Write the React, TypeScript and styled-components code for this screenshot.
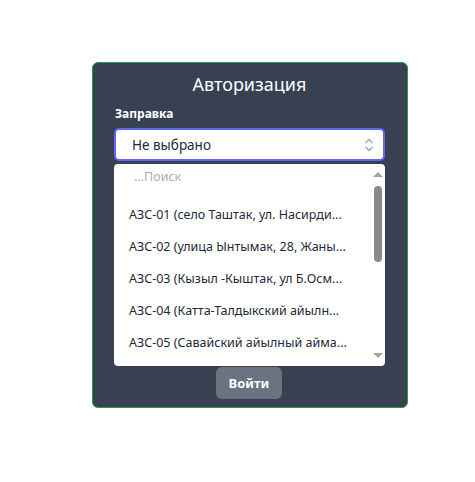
import styled, { createGlobalStyle } from "styled-components";

const GlobalStyle = createGlobalStyle`
  body {
    margin: 0;
    background: #ffffff;
    font-family: "Noto Sans", "Open Sans", sans-serif;
  }
`;

// shown as the menu renders them, already shortened
const stations = [
  "АЗС-01 (село Таштак, ул. Насирди...",
  "АЗС-02 (улица Ынтымак, 28, Жаны...",
  "АЗС-03 (Кызыл -Кыштак, ул Б.Осм...",
  "АЗС-04 (Катта-Талдыкский айылн...",
  "АЗС-05 (Савайский айылный айма...",
];

const ChevronsIcon = () => (
  <svg width="10" height="14" viewBox="0 0 10 14" fill="none">
    <path d="M1.5 5 L5 1.5 L8.5 5" stroke="#9ca3af" strokeWidth="1.3" />
    <path d="M1.5 9 L5 12.5 L8.5 9" stroke="#9ca3af" strokeWidth="1.3" />
  </svg>
);

export default function App() {
  return (
    <>
      <GlobalStyle />
      <StyledPage>
        <StyledCard>
          <StyledTitle>Авторизация</StyledTitle>
          <StyledLabel>Заправка</StyledLabel>
          <StyledSelect>
            <span>Не выбрано</span>
            <ChevronsIcon />
          </StyledSelect>
          <StyledMenu>
            <StyledMenuList>
              <StyledSearch>...Поиск</StyledSearch>
              {stations.map((s) => (
                <StyledOption key={s}>{s}</StyledOption>
              ))}
            </StyledMenuList>
            <StyledScrollbar>
              <StyledArrow up />
              <StyledThumb />
              <StyledTrackRest />
              <StyledArrow />
            </StyledScrollbar>
          </StyledMenu>
          <StyledButtonRow>
            <StyledButton>Войти</StyledButton>
          </StyledButtonRow>
        </StyledCard>
      </StyledPage>
    </>
  );
}

const StyledPage = styled.div`
  padding: 62px 0 0 92px;
`;

const StyledCard = styled.div`
  box-sizing: border-box;
  width: 316px;
  height: 346px;
  background: #374151;
  border: 1px solid #22a045;
  border-radius: 6px;
  padding: 8px 22px 0 21px;
  display: flex;
  flex-direction: column;
`;

const StyledTitle = styled.h1`
  margin: 0;
  text-align: center;
  color: #ffffff;
  font-size: 18px;
  font-weight: 400;
  line-height: 26px;
`;

const StyledLabel = styled.label`
  margin-top: 9px;
  padding-left: 1px;
  color: #ffffff;
  font-size: 12px;
  font-weight: 700;
  line-height: 16px;
`;

const StyledSelect = styled.div`
  box-sizing: border-box;
  margin-top: 6px;
  height: 33px;
  background: #ffffff;
  border: 2px solid #6366f1;
  border-radius: 5px;
  display: flex;
  align-items: center;
  justify-content: space-between;
  padding: 0 9px 0 16px;
  font-size: 13.5px;
  color: #1f2937;
`;

const StyledMenu = styled.div`
  margin-top: 3px;
  height: 202px;
  background: #ffffff;
  border-radius: 4px;
  display: flex;
  overflow: hidden;
`;

const StyledMenuList = styled.div`
  flex: 1;
  min-width: 0;
  padding-right: 8px;
`;

const StyledSearch = styled.div`
  height: 35px;
  box-sizing: border-box;
  padding: 4px 0 0 20px;
  font-size: 12.5px;
  color: #b9a9a9;
`;

const StyledOption = styled.div`
  height: 32px;
  line-height: 32px;
  padding-left: 15px;
  font-size: 12.5px;
  color: #1f2937;
  white-space: nowrap;
`;

const StyledScrollbar = styled.div`
  width: 14px;
  display: flex;
  flex-direction: column;
  align-items: center;
  padding: 4px 0;
  box-sizing: border-box;
`;

const StyledArrow = styled.div<{ up?: boolean }>`
  width: 0;
  height: 0;
  margin: 4px 0;
  border-left: 5px solid transparent;
  border-right: 5px solid transparent;
  ${({ up }) =>
    up ? "border-bottom: 5px solid #a3a3a3;" : "border-top: 5px solid #a3a3a3;"}
`;

const StyledThumb = styled.div`
  margin-top: 5px;
  width: 8px;
  height: 76px;
  border-radius: 4px;
  background: #8a8a8a;
`;

const StyledTrackRest = styled.div`
  flex: 1;
`;

const StyledButtonRow = styled.div`
  display: flex;
  justify-content: center;
  margin-top: 1px;
  padding-right: 1px;
`;

const StyledButton = styled.button`
  width: 66px;
  height: 32px;
  border: none;
  border-radius: 6px;
  background: #6b7280;
  color: #ffffff;
  font-family: inherit;
  font-size: 13px;
  font-weight: 700;
`;
